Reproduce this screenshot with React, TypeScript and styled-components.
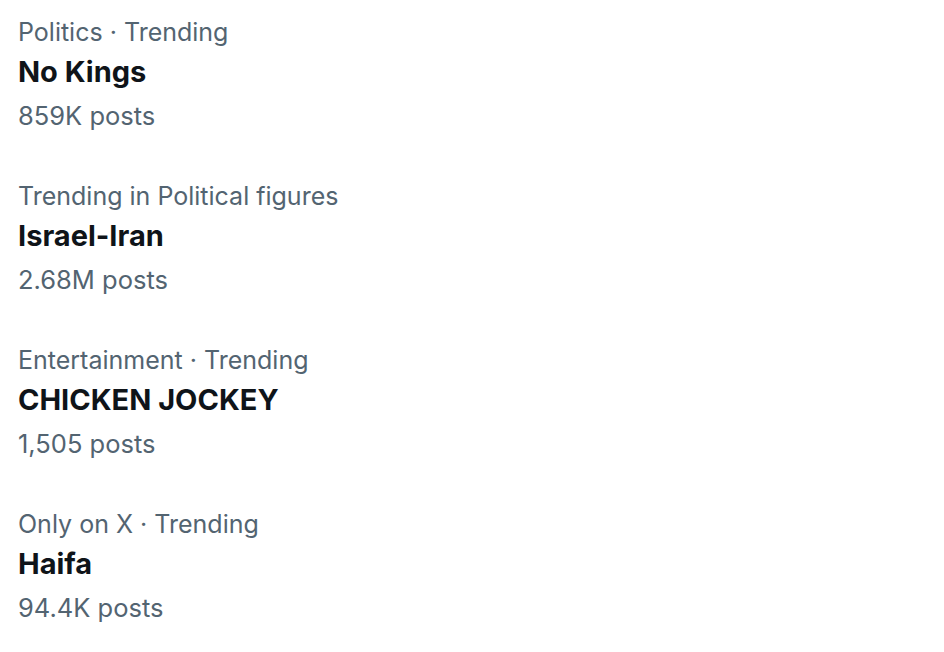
import React from "react";
import styled, { createGlobalStyle } from "styled-components";

type Trend = {
  context: string;
  title: string;
  posts: string;
};

const trends: Trend[] = [
  { context: "Politics · Trending", title: "No Kings", posts: "859K posts" },
  {
    context: "Trending in Political figures",
    title: "Israel-Iran",
    posts: "2.68M posts",
  },
  {
    context: "Entertainment · Trending",
    title: "CHICKEN JOCKEY",
    posts: "1,505 posts",
  },
  { context: "Only on X · Trending", title: "Haifa", posts: "94.4K posts" },
];

const App = () => {
  return (
    <>
      <GlobalStyle />
      <TrendList>
        {trends.map((trend) => (
          <TrendItem key={trend.title}>
            <MetaText>{trend.context}</MetaText>
            <TrendTitle>{trend.title}</TrendTitle>
            <PostCount>{trend.posts}</PostCount>
          </TrendItem>
        ))}
      </TrendList>
    </>
  );
};

const GlobalStyle = createGlobalStyle`
  html, body {
    margin: 0;
    padding: 0;
    background: #fff;
  }
  body {
    font-family: Inter, "Noto Sans", sans-serif;
    -webkit-font-smoothing: antialiased;
  }
`;

const TrendList = styled.ul`
  list-style: none;
  margin: 0;
  padding: 12px 0 0;
  display: flex;
  flex-direction: column;
  width: 944px;
  height: 652px;
  box-sizing: border-box;
`;

const TrendItem = styled.li`
  display: flex;
  flex-direction: column;
  height: 164px;
  padding: 0 18px;
  box-sizing: border-box;
  flex-shrink: 0;
`;

const MetaText = styled.span`
  font-size: 25px;
  line-height: 40px;
  color: #536471;
`;

const TrendTitle = styled.span`
  font-size: 29px;
  line-height: 40px;
  font-weight: 700;
  color: #0f1419;
`;

const PostCount = styled(MetaText)`
  margin-top: 4px;
  font-size: 25.5px;
`;

export default App;
